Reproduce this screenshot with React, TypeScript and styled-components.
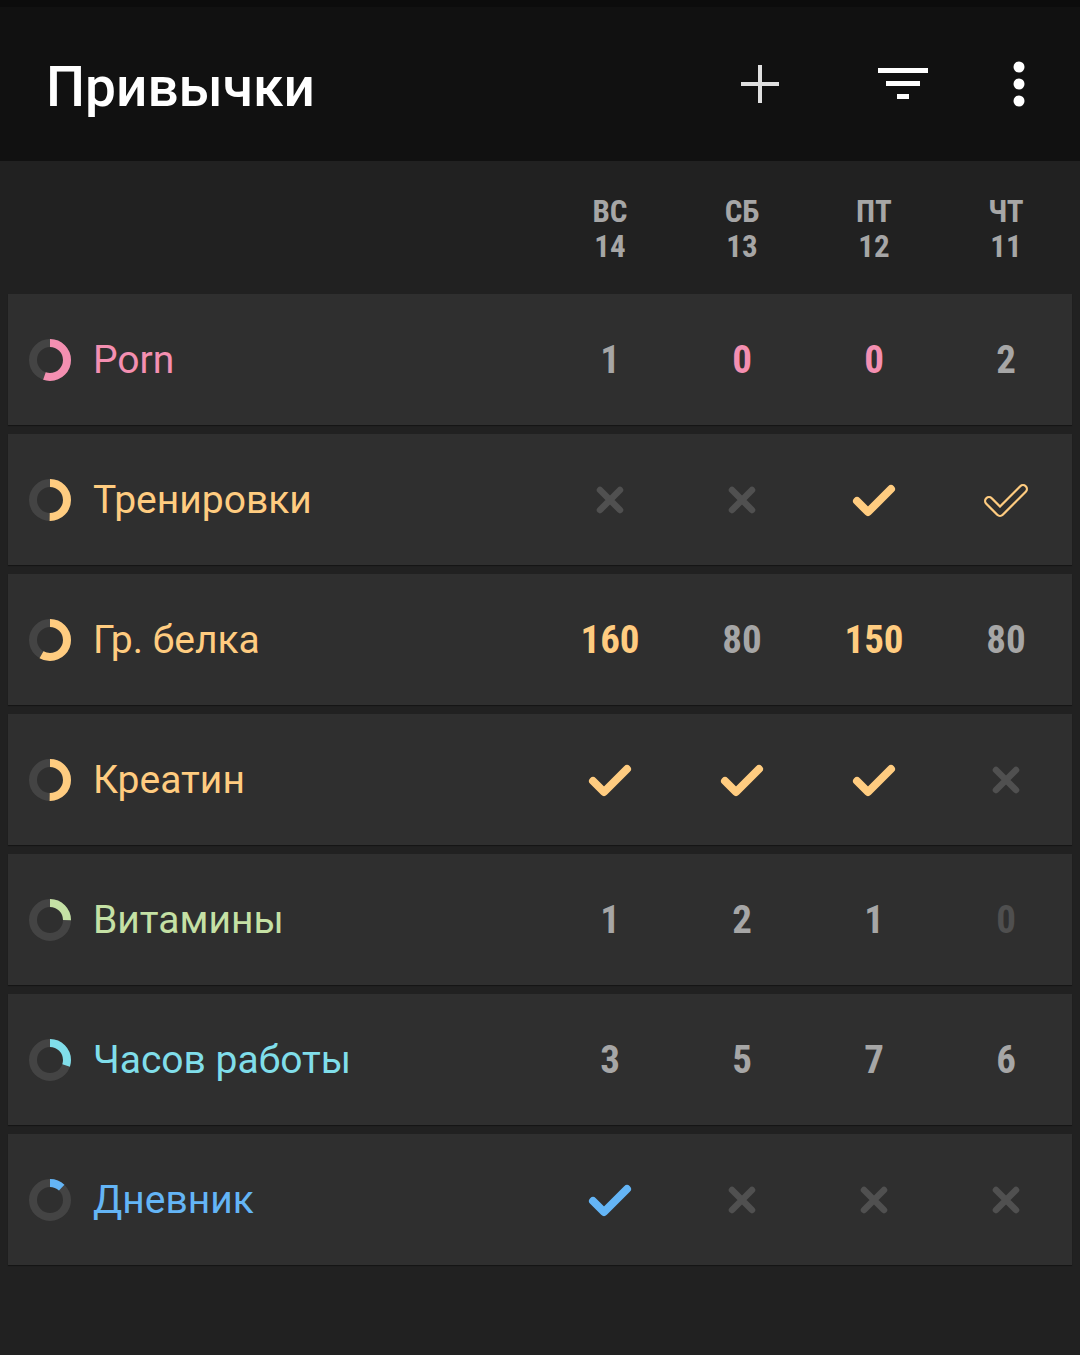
import * as React from 'react';
import styled, {createGlobalStyle} from 'styled-components';

const GlobalStyle = createGlobalStyle`
	html, body {
		margin: 0;
		padding: 0;
		background: #212121;
		font-family: Roboto, "Noto Sans", sans-serif;
	}
`;

type Cell =
	| {kind: 'num'; value: string; tone: 'on' | 'off' | 'dim'}
	| {kind: 'check'}
	| {kind: 'implicit'}
	| {kind: 'cross'};

interface Habit {
	name: string;
	color: string;
	score: number;
	cells: Cell[];
}

const n = (value: string, tone: 'on' | 'off' | 'dim' = 'off'): Cell => ({kind: 'num', value, tone});
const check: Cell = {kind: 'check'};
const implicit: Cell = {kind: 'implicit'};
const cross: Cell = {kind: 'cross'};

const days = [
	{name: 'ВС', date: '14'},
	{name: 'СБ', date: '13'},
	{name: 'ПТ', date: '12'},
	{name: 'ЧТ', date: '11'},
];

const habits: Habit[] = [
	{name: 'Porn', color: '#f48fb1', score: 0.55, cells: [n('1'), n('0', 'on'), n('0', 'on'), n('2')]},
	{name: 'Тренировки', color: '#ffcc80', score: 0.5, cells: [cross, cross, check, implicit]},
	{name: 'Гр. белка', color: '#ffcc80', score: 0.58, cells: [n('160', 'on'), n('80'), n('150', 'on'), n('80')]},
	{name: 'Креатин', color: '#ffcc80', score: 0.5, cells: [check, check, check, cross]},
	{name: 'Витамины', color: '#c5e1a5', score: 0.25, cells: [n('1'), n('2'), n('1'), n('0', 'dim')]},
	{name: 'Часов работы', color: '#80deea', score: 0.3, cells: [n('3'), n('5'), n('7'), n('6')]},
	{name: 'Дневник', color: '#64b5f6', score: 0.12, cells: [check, cross, cross, cross]},
];

const Page = styled.div`
	width: 1080px;
	min-height: 1355px;
	background: #212121;
	display: flex;
	flex-direction: column;
`;

const StatusBar = styled.div`
	height: 7px;
	background: #0c0c0c;
`;

const Toolbar = styled.div`
	height: 154px;
	background: #111111;
	display: flex;
	align-items: center;
	padding: 0 36px 0 46px;
`;

const Title = styled.h1`
	flex: 1;
	margin: 0;
	color: #ffffff;
	font-size: 55px;
	font-weight: 500;
	padding-top: 6px;
`;

const ToolButton = styled.div<{$width: number}>`
	width: ${p => p.$width}px;
	height: 100px;
	display: flex;
	align-items: center;
	justify-content: center;
`;

const HeaderRow = styled.div`
	height: 132px;
	display: flex;
	align-items: center;
	padding: 0 8px;
`;

const Spacer = styled.div`
	flex: 1;
`;

const DayLabel = styled.div`
	width: 132px;
	text-align: center;
	color: #a6a6a6;
	font-size: 31px;
	font-weight: 700;
	font-stretch: 75%;
	line-height: 35px;
	padding-top: 3px;
`;

const List = styled.div`
	display: flex;
	flex-direction: column;
	gap: 8px;
	padding: 1px 8px 0;
`;

const Card = styled.div`
	height: 131px;
	background: #2f2f2f;
	display: flex;
	align-items: center;
	box-shadow: 0 1px 1px rgba(0, 0, 0, 0.35);
	& + & {
		margin-top: 1px;
	}
`;

const NameBlock = styled.div`
	flex: 1;
	display: flex;
	align-items: center;
	gap: 22px;
	padding-left: 21px;
`;

const Name = styled.span<{$color: string}>`
	color: ${p => p.$color};
	font-size: 39px;
	font-weight: 400;
`;

const CellBox = styled.div`
	width: 132px;
	height: 100%;
	display: flex;
	align-items: center;
	justify-content: center;
`;

const Number = styled.span<{$color: string}>`
	color: ${p => p.$color};
	font-size: 39px;
	font-weight: 700;
	font-stretch: 75%;
`;

const Ring: React.FC<{color: string; score: number}> = ({color, score}) => {
	const r = 17;
	const len = 2 * Math.PI * r;
	return (
		<svg width="42" height="42" viewBox="0 0 42 42">
			<circle cx="21" cy="21" r={r} fill="none" stroke="#444444" strokeWidth="8" />
			<circle
				cx="21"
				cy="21"
				r={r}
				fill="none"
				stroke={color}
				strokeWidth="8"
				strokeDasharray={`${len * score} ${len}`}
				transform="rotate(-90 21 21)"
			/>
		</svg>
	);
};

const CheckMark: React.FC<{color: string; outline?: boolean}> = ({color, outline}) => (
	<svg width="44" height="34" viewBox="0 0 44 34">
		{outline ? (
			<>
				<path d="M5 18 L16 29 L39 6" fill="none" stroke={color} strokeWidth="10" strokeLinecap="round" strokeLinejoin="round" />
				<path d="M5 18 L16 29 L39 6" fill="none" stroke="#2f2f2f" strokeWidth="5.5" strokeLinecap="round" strokeLinejoin="round" />
			</>
		) : (
			<path d="M5 18 L16 29 L39 6" fill="none" stroke={color} strokeWidth="8" strokeLinecap="round" strokeLinejoin="round" />
		)}
	</svg>
);

const CrossMark = () => (
	<svg width="28" height="28" viewBox="0 0 28 28">
		<path d="M4 4 L24 24 M24 4 L4 24" stroke="#505050" strokeWidth="6.5" strokeLinecap="round" />
	</svg>
);

const renderCell = (cell: Cell, habit: Habit) => {
	switch (cell.kind) {
		case 'num': {
			const color = cell.tone === 'on' ? habit.color : cell.tone === 'dim' ? '#4f4f4f' : '#a6a6a6';
			return <Number $color={color}>{cell.value}</Number>;
		}
		case 'check':
			return <CheckMark color={habit.color} />;
		case 'implicit':
			return <CheckMark color={habit.color} outline />;
		case 'cross':
			return <CrossMark />;
	}
};

export default function App() {
	return (
		<Page>
			<GlobalStyle />
			<StatusBar />
			<Toolbar>
				<Title>Привычки</Title>
				<ToolButton $width={104}>
					<svg width="42" height="42" viewBox="0 0 42 42">
						<path d="M21 2 V40 M2 21 H40" stroke="#e0e0e0" strokeWidth="4" />
					</svg>
				</ToolButton>
				<ToolButton $width={182}>
					<svg width="52" height="36" viewBox="0 0 52 36">
						<rect x="1" y="2" width="50" height="5" fill="#ffffff" />
						<rect x="9" y="15" width="34" height="5" fill="#ffffff" />
						<rect x="20" y="28" width="12" height="5" fill="#ffffff" />
					</svg>
				</ToolButton>
				<ToolButton $width={50}>
					<svg width="12" height="46" viewBox="0 0 12 46">
						<circle cx="6" cy="6" r="5.5" fill="#ffffff" />
						<circle cx="6" cy="23" r="5.5" fill="#ffffff" />
						<circle cx="6" cy="40" r="5.5" fill="#ffffff" />
					</svg>
				</ToolButton>
			</Toolbar>
			<HeaderRow>
				<Spacer />
				{days.map(d => (
					<DayLabel key={d.name}>
						{d.name}
						<br />
						{d.date}
					</DayLabel>
				))}
			</HeaderRow>
			<List>
				{habits.map(h => (
					<Card key={h.name}>
						<NameBlock>
							<Ring color={h.color} score={h.score} />
							<Name $color={h.color}>{h.name}</Name>
						</NameBlock>
						{h.cells.map((c, i) => (
							<CellBox key={i}>{renderCell(c, h)}</CellBox>
						))}
					</Card>
				))}
			</List>
		</Page>
	);
}
